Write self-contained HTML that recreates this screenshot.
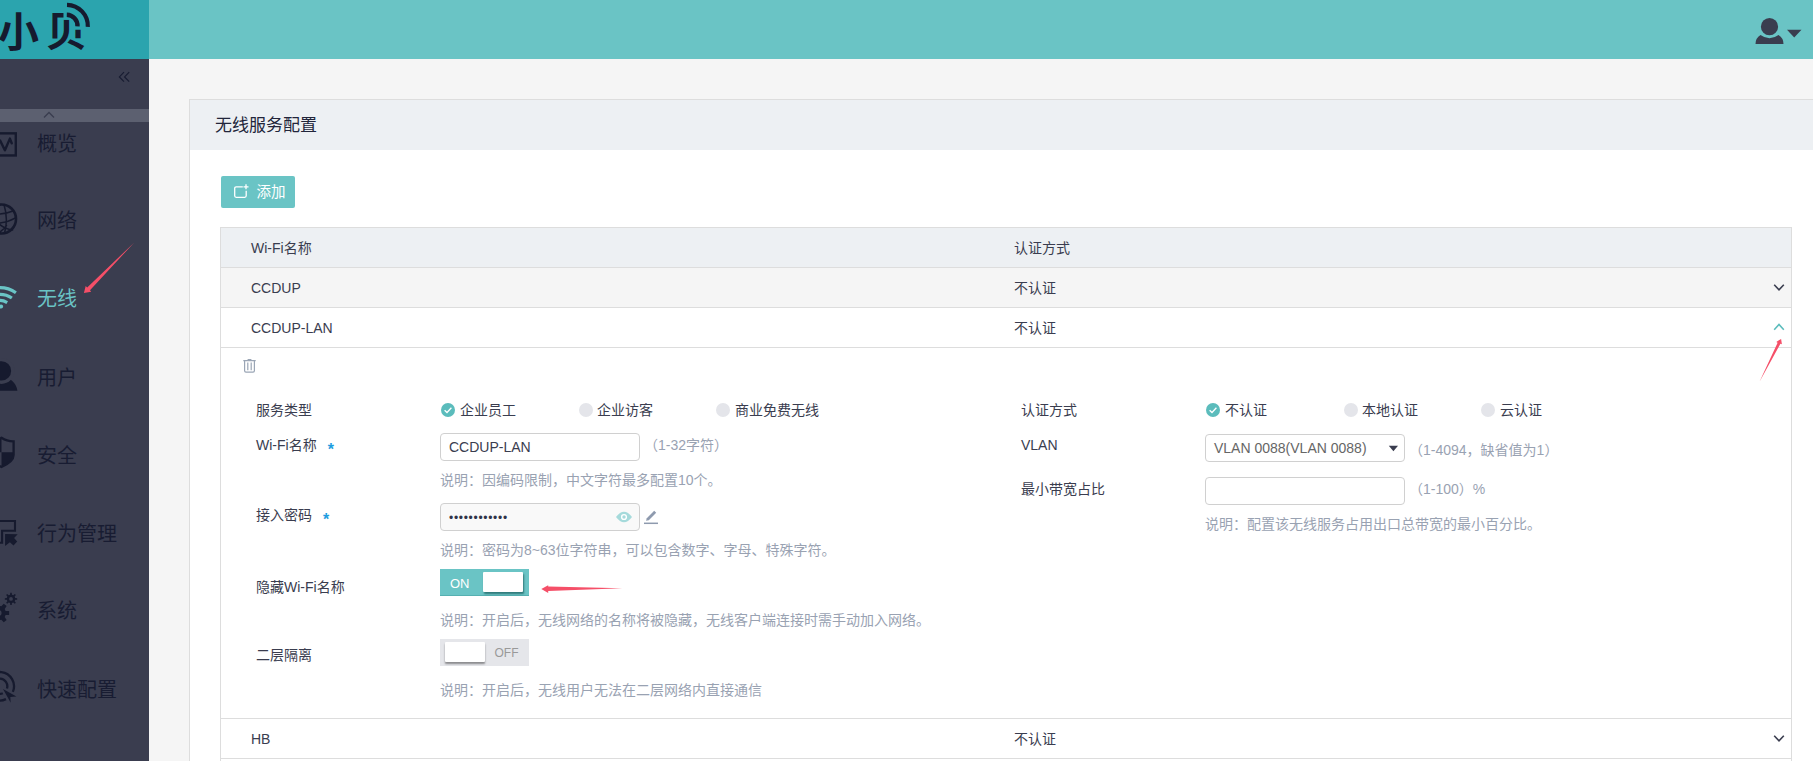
<!DOCTYPE html>
<html lang="zh-CN">
<head>
<meta charset="utf-8">
<title>无线服务配置</title>
<style>
*{box-sizing:border-box;margin:0;padding:0}
html,body{width:1813px;height:761px;overflow:hidden;background:#f5f5f5}
body{font-family:"Liberation Sans","Noto Sans CJK SC",sans-serif;font-size:14px;color:#3a3d4f;position:relative}
.abs{position:absolute}
#hdr{position:absolute;left:0;top:0;width:1813px;height:59px;background:#6ac4c5}
#logo{position:absolute;left:0;top:0;width:149px;height:59px;background:#2ba4ae;overflow:hidden}
#logo .t{position:absolute;top:-1px;font-size:41px;line-height:60px;font-weight:700;color:#161a2e;white-space:nowrap;font-family:"Noto Sans CJK SC",sans-serif}
#side{position:absolute;left:0;top:59px;width:149px;height:702px;background:#3a3d4f;overflow:hidden}
#side .bar{position:absolute;left:0;top:50px;width:149px;height:13px;background:#5c6070}
.mi{position:absolute;left:37px;font-size:20px;line-height:30px;color:#181c32;white-space:nowrap;font-weight:400;font-family:"Noto Sans CJK SC",sans-serif}
.mi.on{color:#6ac4c5}
.ic{position:absolute;left:0}
#panel{position:absolute;left:189px;top:99px;width:1640px;height:700px;background:#fff;border:1px solid #ddd}
#ph{position:absolute;left:0;top:0;width:100%;height:50px;background:#edf0f3}
#ph span{position:absolute;left:25px;top:13px;font-size:17px;line-height:25px;color:#22253a}
#add{position:absolute;left:221px;top:176px;width:74px;height:32px;background:#6ac4c5;border-radius:2px;color:#fff;font-size:14.500px;line-height:33px}
#add span{position:absolute;left:35.500px;top:0}
#tbl{position:absolute;left:220px;top:227px;width:1572px;height:560px;border:1px solid #ddd;background:#fff}
.row{position:absolute;left:0;width:1570px;height:40px;border-bottom:1px solid #ddd;font-size:14px;line-height:41px;color:#3a3d4f}
.row .c1{position:absolute;left:30px;top:0}
.row .c2{position:absolute;left:793px;top:0}
.lbl{position:absolute;font-size:14px;line-height:20px;color:#3a3d4f;white-space:nowrap}
.hint{position:absolute;font-size:14px;line-height:20px;color:#99a2b2;white-space:nowrap}
.inp{position:absolute;width:200px;height:28px;border:1px solid #d0d0d0;border-radius:4px;background:#fff;font-size:14px;line-height:27px;padding-left:8px;color:#3a3d4f;white-space:nowrap}
.rad{position:absolute;width:14px;height:14px;border-radius:50%;background:#e4e5ea}
.rad.on{background:#5bbcbc}
.star{color:#1e9de0;font-size:16px;font-weight:700;margin-left:11px;position:relative;top:5px;line-height:10px}
.sw{position:absolute;width:89px;height:27px;font-size:13px;line-height:27px}
</style>
</head>
<body>
<div id="hdr"></div>
<div id="logo"><div class="t" style="left:-2px">小</div><div class="t" style="left:46px;top:-2px;clip-path:polygon(0 0,17.500px 0,17.500px 21.800px,25px 21.800px,25px 31.800px,50px 31.800px,50px 60px,0 60px)">贝</div>
<svg class="abs" style="left:0;top:0" width="149" height="59" viewBox="0 0 149 59"><g fill="none" stroke="#161a2e"><path d="M66.800 14.800 A11 11 0 0 1 77.500 26.300" stroke-width="4.400"/><path d="M67 4.800 A21.200 21.200 0 0 1 87.800 26.800" stroke-width="4.200"/></g></svg>
</div>
<svg class="abs" style="left:1750px;top:14px" width="60" height="34" viewBox="0 0 60 34">
<circle cx="19.500" cy="12.700" r="8.600" fill="#3a3d4f"/>
<path d="M5.500 30 Q5.500 24 10.500 21 Q19.500 27.500 28.500 21 Q33.500 24 33.500 30 Z" fill="#3a3d4f"/>
<path d="M37 15.800 L51.500 15.800 L44.200 23.500 Z" fill="#3a3d4f"/>
</svg>

<div id="side">
 <svg class="abs" style="left:115px;top:10px" width="20" height="16" viewBox="115 69 20 16"><path d="M124 72.200 L119.400 76.900 L124 81.600 M129.200 72.200 L124.600 76.900 L129.200 81.600" fill="none" stroke="#181c32" stroke-width="1.200"/></svg>
 <div class="bar"></div>
 <svg class="abs" style="left:43px;top:52px" width="12" height="8" viewBox="0 0 12 8"><path d="M1 6.500 L6 1.500 L11 6.500" fill="none" stroke="#3a3d4f" stroke-width="1.300"/></svg>
 <div class="mi" style="top:69px">概览</div>
 <div class="mi" style="top:146px">网络</div>
 <div class="mi on" style="top:224px">无线</div>
 <div class="mi" style="top:303px">用户</div>
 <div class="mi" style="top:381px">安全</div>
 <div class="mi" style="top:459px">行为管理</div>
 <div class="mi" style="top:536px">系统</div>
 <div class="mi" style="top:615px">快速配置</div>
</div>
<svg class="abs" style="left:0;top:0" width="149" height="761" viewBox="0 0 149 761">
 <g fill="none" stroke="#161a2e" stroke-linejoin="round">
  <rect x="-12" y="133.350" width="27.800" height="22.100" stroke-width="2.400" stroke-linejoin="miter"/>
  <path d="M-4 146 L0 140.400 L4.900 150.300 L9.900 138.600 L11.700 143.300" stroke-width="2.400" stroke-linecap="round"/>
  <circle cx="1.500" cy="219" r="14.500" stroke-width="2.600"/>
  <path d="M4 204.800 Q8.500 219 4.500 233.200 M-12 213.800 Q2 215.500 13.800 210.800 M-12 222.500 Q3 225 15.500 217.800 M-6 219 Q3 229.500 13.200 230 M-2 233.500 Q4.500 229 6.800 225" stroke-width="1.500"/>
 </g>
 <g fill="none" stroke="#6ac4c5" stroke-width="3.200">
  <path d="M-15.91 292.69 A27.4 27.4 0 0 1 15.91 292.69"/>
  <path d="M-11.87 298.04 A20.7 20.7 0 0 1 11.87 298.04"/>
  <path d="M-7.20 302.53 A14.4 14.4 0 0 1 7.20 302.53"/>
 </g>
 <circle cx="1.100" cy="306.600" r="2" fill="#6ac4c5"/>
 <g fill="#161a2e">
  <path d="M-14.700 390.700 A16.200 16.200 0 0 1 17.400 390.700 Z"/>
  <circle cx="1.500" cy="370.900" r="13" fill="#3a3d4f"/>
  <circle cx="1.500" cy="370.900" r="9.650"/>
 </g>
 <g fill="#161a2e" stroke="none">
  <path d="M1.500 452.300 L13.600 452.300 L13.600 455 Q13.600 461.500 1.500 467 Z"/>
  <path d="M1.500 437.800 Q-4 441.500 -10.600 441.400 L-10.600 452.300 L1.500 452.300Z"/>
 </g>
 <path d="M1.500 437.800 Q7 441.500 13.600 441.400 L13.600 455 Q13.600 461.500 1.500 467 Q-10.600 461.500 -10.600 455 L-10.600 441.400 Q-4 441.500 1.500 437.800 Z" fill="none" stroke="#161a2e" stroke-width="2.300" stroke-linejoin="miter"/>
 <path d="M-12 521.050 L15 521.050 L15 530.750 L2.100 530.750 L2.100 542.800 L-12 542.800" fill="none" stroke="#161a2e" stroke-width="2.100"/>
 <path d="M5.100 534 L17.700 534.300 L14.100 537.900 L17.200 541.500 L13.500 545.400 L9.900 542.200 L5.100 546 Z" fill="#161a2e"/>
 <g fill="#161a2e" fill-rule="evenodd">
  <path d="M15.20 597.96 L17.16 598.17 L17.16 599.63 L15.20 599.84 L14.63 601.20 L15.87 602.74 L14.84 603.77 L13.30 602.53 L11.94 603.10 L11.73 605.06 L10.27 605.06 L10.06 603.10 L8.70 602.53 L7.16 603.77 L6.13 602.74 L7.37 601.20 L6.80 599.84 L4.84 599.63 L4.84 598.17 L6.80 597.96 L7.37 596.60 L6.13 595.06 L7.16 594.03 L8.70 595.27 L10.06 594.70 L10.27 592.74 L11.73 592.74 L11.94 594.70 L13.30 595.27 L14.84 594.03 L15.87 595.06 L14.63 596.60ZM9.10 598.90 a1.90 1.90 0 1 0 3.80 0 a1.90 1.90 0 1 0 -3.80 0Z"/>
  <path d="M5.59 610.90 L9.13 611.11 L9.13 614.89 L5.59 615.10 L4.64 617.07 L6.68 619.97 L3.72 622.33 L1.35 619.69 L-0.78 620.18 L-1.78 623.59 L-5.47 622.75 L-4.88 619.25 L-6.59 617.88 L-9.88 619.23 L-11.52 615.82 L-8.42 614.09 L-8.42 611.91 L-11.52 610.18 L-9.88 606.77 L-6.59 608.12 L-4.88 606.75 L-5.47 603.25 L-1.78 602.41 L-0.78 605.82 L1.35 606.31 L3.72 603.67 L6.68 606.03 L4.64 608.93ZM-4.20 613.00 a2.90 2.90 0 1 0 5.80 0 a2.90 2.90 0 1 0 -5.80 0Z"/>
 </g>
 <g fill="none" stroke="#161a2e" stroke-width="2.300">
  <path d="M5.970 699.150 A14.300 14.300 0 1 1 12.860 691.890"/>
  <path d="M2.790 693.240 A7.600 7.600 0 1 1 6.970 688.520"/>
 </g>
 <path d="M3 689 L16.400 696.500 L10.300 697 L10.700 702.800 Z" fill="#161a2e"/>
 <path d="M134.300 242.400 L90 290.300 L91.200 291.700 L83.900 292.900 L85.700 286.100 L87.200 287.500 Z" fill="#f54f68"/>
</svg>

<div id="panel"><div id="ph"><span>无线服务配置</span></div></div>
<div id="add"><svg class="abs" style="left:12px;top:8px" width="16" height="16" viewBox="0 0 16 16"><path d="M9.800 2.800 H3.200 Q1.700 2.800 1.700 4.300 V11.800 Q1.700 13.300 3.200 13.300 H11.700 Q13.200 13.300 13.200 11.800 V6.800 M13 0.300 V5.300 M10.500 2.800 H15.500" fill="none" stroke="#fff" stroke-width="1.300"/></svg><span>添加</span></div>

<div id="tbl">
 <div class="row" style="top:0;background:#edf0f3"><span class="c1">Wi-Fi名称</span><span class="c2">认证方式</span></div>
 <div class="row" style="top:40px;background:#f5f5f5"><span class="c1">CCDUP</span><span class="c2">不认证</span></div>
 <div class="row" style="top:80px"><span class="c1">CCDUP-LAN</span><span class="c2">不认证</span></div>
 <div class="row" style="top:490px;border-top:1px solid #ddd;height:41px"><span class="c1">HB</span><span class="c2">不认证</span></div>
</div>
<svg class="abs" style="left:1760px;top:270px" width="40" height="480" viewBox="1760 270 40 480">
 <path d="M1774.200 284.800 L1779 289.800 L1783.800 284.800" fill="none" stroke="#3a3d4f" stroke-width="1.600"/>
 <path d="M1774.200 329.700 L1779 324.500 L1783.800 329.700" fill="none" stroke="#5bbcbc" stroke-width="1.600"/>
 <path d="M1774.200 735.800 L1779 740.800 L1783.800 735.800" fill="none" stroke="#3a3d4f" stroke-width="1.600"/>
</svg>
<svg class="abs" style="left:1750px;top:330px" width="45" height="60" viewBox="1750 330 45 60"><path d="M1759.500 381.700 L1777.600 342.800 L1776.300 341.900 L1781.100 338.900 L1781.900 344.300 L1780.400 343.800 Z" fill="#f54f68"/></svg>
<svg class="abs" style="left:535px;top:580px" width="95" height="18" viewBox="535 580 95 18"><path d="M622.200 588.200 L548.200 586.600 L548.200 585.200 L541.300 588.900 L548.200 593 L548.200 591 Z" fill="#f54f68"/></svg>

<svg class="abs" style="left:242px;top:358px" width="16" height="16" viewBox="0 0 16 16"><g fill="none" stroke="#9aa5b5" stroke-width="1.200"><path d="M1.300 2.600 H13.700 M6.200 2.600 V1.500 H8.800 V2.600 M2.600 2.600 V12.800 Q2.600 14.200 4 14.200 H11 Q12.400 14.200 12.400 12.800 V2.600 M5.800 4.500 V12.200 M9.200 4.500 V12.200"/></g></svg>

<div class="lbl" style="left:256px;top:400px">服务类型</div>
<div class="lbl" style="left:256px;top:435px">Wi-Fi名称<span class="star">*</span></div>
<div class="lbl" style="left:256px;top:505px">接入密码<span class="star">*</span></div>
<div class="lbl" style="left:256px;top:577px">隐藏Wi-Fi名称</div>
<div class="lbl" style="left:256px;top:645px">二层隔离</div>

<div class="rad on" style="left:441px;top:403px"><svg width="14" height="14" viewBox="0 0 14 14"><path d="M3.600 7.200 L6 9.500 L10.400 4.800" fill="none" stroke="#fff" stroke-width="1.300"/></svg></div><div class="lbl" style="left:460px;top:400px">企业员工</div>
<div class="rad" style="left:579px;top:403px"></div><div class="lbl" style="left:597px;top:400px">企业访客</div>
<div class="rad" style="left:716px;top:403px"></div><div class="lbl" style="left:735px;top:400px">商业免费无线</div>

<div class="inp" style="left:440px;top:433px">CCDUP-LAN</div>
<div class="hint" style="left:644px;top:435px">（1-32字符）</div>
<div class="hint" style="left:440px;top:470px">说明：因编码限制，中文字符最多配置10个。</div>
<div class="inp" style="left:440px;top:503px;background:#f9f9f9"></div>
<div class="abs" style="left:449px;top:504px;font-size:12px;line-height:28px;letter-spacing:0.700px;color:#2f3348">••••••••••••</div>
<svg class="abs" style="left:615px;top:510px" width="18" height="14" viewBox="0 0 18 14"><path d="M1 7 Q9 -3.500 17 7 Q9 17.500 1 7Z" fill="#a5dadb"/><circle cx="9" cy="7" r="3.100" fill="#fff"/><circle cx="9" cy="7" r="1.700" fill="#a5dadb"/></svg>
<svg class="abs" style="left:643px;top:508px" width="17" height="17" viewBox="0 0 17 17"><path d="M3 12.800 L3.800 10.200 L11.200 2.800 L13.200 4.800 L5.800 12.200 Z" fill="#8e9aae"/><path d="M1 15.300 H15" stroke="#8e9aae" stroke-width="1.500"/></svg>
<div class="hint" style="left:440px;top:540px">说明：密码为8~63位字符串，可以包含数字、字母、特殊字符。</div>
<div class="sw" style="left:440px;top:569px;background:#6ac4c5;color:#fff;box-shadow:inset 0 -1px 0 #55b0b1"><span class="abs" style="left:10px;top:0.700px">ON</span><span class="abs" style="left:43px;top:3px;width:40px;height:20px;background:#fff;border-radius:1px;box-shadow:1px 2px 2px rgba(0,60,60,.55)"></span></div>
<div class="hint" style="left:440px;top:610px">说明：开启后，无线网络的名称将被隐藏，无线客户端连接时需手动加入网络。</div>
<div class="sw" style="left:440px;top:639px;background:#e5e6ea;color:#999"><span class="abs" style="left:5px;top:3px;width:40px;height:20px;background:#fff;border-radius:1px;box-shadow:0 2px 2px rgba(0,0,0,.4)"></span><span class="abs" style="left:54.500px;top:0.500px;font-size:12px">OFF</span></div>
<div class="hint" style="left:440px;top:680px">说明：开启后，无线用户无法在二层网络内直接通信</div>

<div class="lbl" style="left:1021px;top:400px">认证方式</div>
<div class="lbl" style="left:1021px;top:435px">VLAN</div>
<div class="lbl" style="left:1021px;top:479px">最小带宽占比</div>
<div class="rad on" style="left:1206px;top:403px"><svg width="14" height="14" viewBox="0 0 14 14"><path d="M3.600 7.200 L6 9.500 L10.400 4.800" fill="none" stroke="#fff" stroke-width="1.300"/></svg></div><div class="lbl" style="left:1225px;top:400px">不认证</div>
<div class="rad" style="left:1344px;top:403px"></div><div class="lbl" style="left:1362px;top:400px">本地认证</div>
<div class="rad" style="left:1481px;top:403px"></div><div class="lbl" style="left:1500px;top:400px">云认证</div>
<div class="inp" style="left:1205px;top:434px;color:#666">VLAN 0088(VLAN 0088)</div>
<svg class="abs" style="left:1388px;top:445px" width="11" height="7" viewBox="0 0 11 7"><path d="M0.800 0.800 L10 0.800 L5.400 6.300 Z" fill="#3a3d4f"/></svg>
<div class="hint" style="left:1409px;top:440px">（1-4094，缺省值为1）</div>
<div class="inp" style="left:1205px;top:477px"></div>
<div class="hint" style="left:1409px;top:479px">（1-100）%</div>
<div class="hint" style="left:1205px;top:514px">说明：配置该无线服务占用出口总带宽的最小百分比。</div>
</body>
</html>
